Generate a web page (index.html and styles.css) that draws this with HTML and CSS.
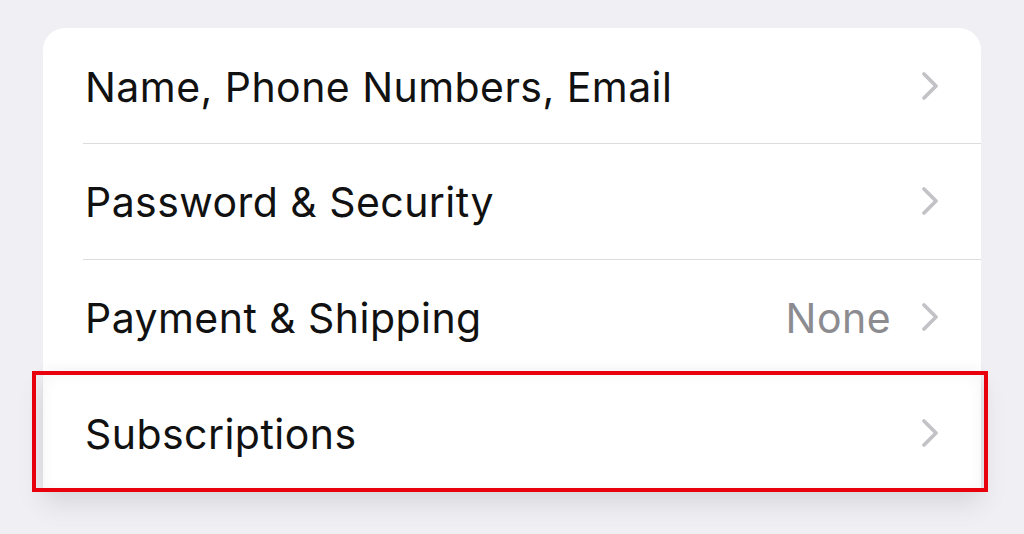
FILE: index.html
```html
<!DOCTYPE html>
<html lang="en">
<head>
<meta charset="utf-8">
<title>Account</title>
<link rel="stylesheet" href="styles.css">
</head>
<body>
<div class="page">
  <div class="card">
    <div class="row">
      <span class="label">Name, Phone Numbers, Email</span>
      <span class="right">
        <svg class="chev" viewBox="0 0 18 30" width="18" height="30"><path d="M3 3 L15 15 L3 27"/></svg>
      </span>
    </div>
    <div class="row">
      <span class="label">Password &amp; Security</span>
      <span class="right">
        <svg class="chev" viewBox="0 0 18 30" width="18" height="30"><path d="M3 3 L15 15 L3 27"/></svg>
      </span>
    </div>
    <div class="row">
      <span class="label">Payment &amp; Shipping</span>
      <span class="right">
        <span class="value">None</span>
        <svg class="chev" viewBox="0 0 18 30" width="18" height="30"><path d="M3 3 L15 15 L3 27"/></svg>
      </span>
    </div>
    <div class="row highlight">
      <span class="label">Subscriptions</span>
      <span class="right">
        <svg class="chev" viewBox="0 0 18 30" width="18" height="30"><path d="M3 3 L15 15 L3 27"/></svg>
      </span>
    </div>
  </div>
</div>
</body>
</html>
```
FILE: styles.css
```css
html, body {
  margin: 0;
  padding: 0;
  background: #efeff4;
}
body {
  font-family: Inter, "Noto Sans", "Liberation Sans", sans-serif;
  width: 1024px;
  height: 534px;
  overflow: hidden;
}
.page {
  padding: 28px 43px 0 43px;
}
.card {
  width: 938px;
  background: #ffffff;
  border-radius: 22px 22px 0 0;
  display: flex;
  flex-direction: column;
}
.row {
  position: relative;
  height: 115px;
  display: flex;
  align-items: center;
  justify-content: space-between;
  padding: 0 42px 0 43px;
  box-sizing: border-box;
}
.row + .row {
  height: 116px;
}
.row + .row::before {
  content: "";
  position: absolute;
  top: 0;
  left: 40px;
  right: 0;
  height: 1px;
  background: #dcdce0;
}
.label {
  font-size: 41px;
  color: #111111;
  letter-spacing: 0.45px;
  padding-top: 2px;
  margin-left: -1px;
}
.right {
  display: flex;
  align-items: center;
  gap: 30px;
}
.value {
  font-size: 41px;
  color: #8c8c90;
  letter-spacing: 0.45px;
  padding-top: 2px;
}
.chev {
  display: block;
  fill: none;
  stroke: #c3c3c7;
  stroke-width: 3.8;
  stroke-linecap: round;
  stroke-linejoin: round;
}
.highlight {
  background: #ffffff;
  box-shadow: 0 12px 26px rgba(0, 0, 0, 0.10), 0 -4px 16px rgba(0, 0, 0, 0.05), inset 0 0 14px rgba(0, 0, 0, 0.05);
  z-index: 1;
}
.highlight::before {
  display: none;
}
.highlight::after {
  content: "";
  position: absolute;
  left: -11px;
  right: -7px;
  top: -4px;
  bottom: -1px;
  border: 4px solid #e8000c;
  pointer-events: none;
}
```
